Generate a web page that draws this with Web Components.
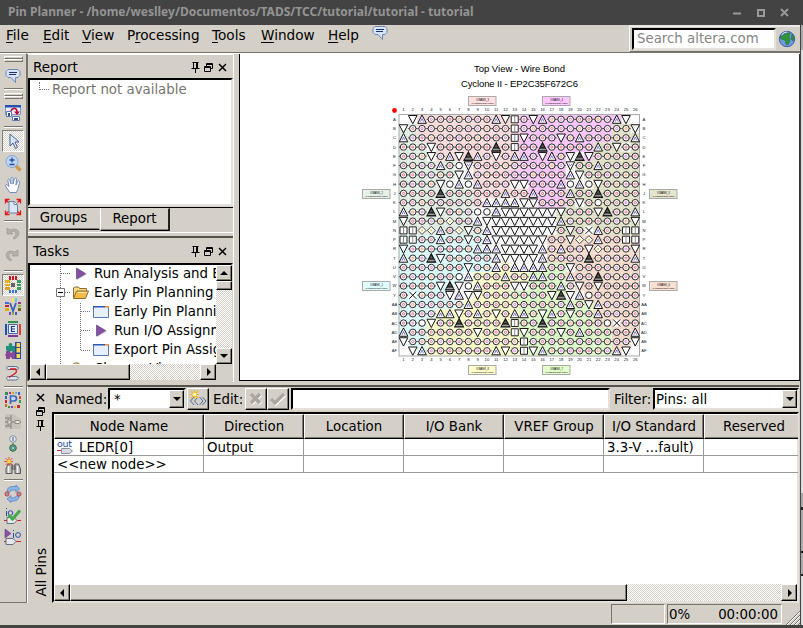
<!DOCTYPE html>
<html lang="en">
<head>
<meta charset="utf-8">
<title>Pin Planner</title>
<style>
html,body{margin:0;height:100%;overflow:hidden;background:#d4d0c8}
body{font:13.33px "DejaVu Sans",sans-serif;color:#000}
</style>
</head>
<body>
<pin-planner></pin-planner>
<script>
const def = (tag, css, html, init) => customElements.define(tag, class extends HTMLElement {
  constructor() {
    super();
    this.attachShadow({mode: 'open'}).innerHTML =
      `<style>*{box-sizing:border-box}:host{display:block;box-sizing:border-box;white-space:nowrap}${css}</style>${html}`;
  }
  connectedCallback() { if (init && !this.ready) { this.ready = true; init(this, this.shadowRoot); } }
});
const check = 'repeating-conic-gradient(#fff 0 25%,#d4d0c8 0 50%) 0 0/2px 2px';

/* ---------- icons ---------- */
const cells = (list) => list.map(([x, y, w, h, c]) => `<rect x="${x}" y="${y}" width="${w}" height="${h}" fill="${c}"/>`).join('');
const ICONS = {
  bubble: '<path d="M4 2.500h10l2 2v4l-2 2h-2.500v5l-4.500-5H4l-2-2v-4z" fill="#d5e4fb" stroke="#7188b0"/><path d="M5 5.500h8M5 7.500h7" stroke="#22345c" stroke-width="1.100"/>',
  find: '<path d="M1.500 1.500h15v9h-15z" fill="#e8eefa" stroke="#7f98cc"/><path d="M1 1h16v2.500H1z" fill="#2850b0"/><path d="M7 7q1-3 4-2.500 2 .5 2 3.500" fill="none" stroke="#c00030" stroke-width="1.500"/><path d="M10 7.500h6l-3 3.500z" fill="#c00030"/><path d="M2.500 7.500h5v5h-5zM8.500 12.500h7v4h-7z" fill="#fff" stroke="#5c78b0"/><path d="M4 9h2v3H4zM10 14h4v2h-4z" fill="#38507c"/>',
  arrow: '<path d="M6 2v12l3-3 2.500 5.500 2-1L11 10h4z" fill="#dbe7ff" stroke="#4a6394"/>',
  zoom: '<path d="M12 12l4.500 4.500" stroke="#d09848" stroke-width="3.400"/><circle cx="8" cy="7.500" r="6" fill="#bcd6fa" stroke="#86a6d2"/><path d="M8 3.500v5M5.500 6h5M5.500 10.500h5" stroke="#244c98" stroke-width="1.300"/>',
  hand: '<path d="M6 16.500L2 11c-1.200-2 .3-3 1.500-1.800L5 10.500 3.800 4.500c0-1.500 1.600-1.700 2 0L7 8V2.500c0-1.700 2-1.700 2 0V8l1.500-5.200c.6-1.500 2-1 2 .5L12 9l1.700-3.600c1-1.200 2.300-.4 1.900.9L14 12.500l-1.500 4z" fill="#fff" stroke="#6f8cc0"/>',
  fit: '<path d="M5 3.500h5.500l3 3v8.500H5z" fill="#dbe6fb" stroke="#6c80a8"/><path d="M10 3.500v3h3" fill="#fff" stroke="#6c80a8"/><path d="M1.500 5.500v-4h4M1.500 1.500l3 3M12.500 1.500h4v4M16.500 1.500l-3 3M1.500 12.500v4h4M1.500 16.500l3-3M16.500 12.500v4h-4M16.500 16.500l-3-3" fill="none" stroke="#e01818" stroke-width="1.300"/>',
  undo: '<path d="M3 3v6h6L7 7q5-2 5 2 0 2-3 4l2 1q4-3 4-6-1-6-9-3z" fill="#b4b1aa" stroke="#9d9992" stroke-width=".7"/>',
  redo: '<path d="M14 3v6H8l2-2Q5 5 5 9q0 2 3 4l-2 1Q2 11 2 8q1-6 9-3z" fill="#b4b1aa" stroke="#9d9992" stroke-width=".7"/>',
  pads: cells([[5,0,2,4,'#d01820'],[8,0,2,4,'#d01820'],[11,0,2,4,'#d01820'],[1,4,5,3,'#e0b020'],[1,8,5,2,'#e0b020'],[1,11,5,3,'#e0a028'],[13,4,4,3,'#38a058'],[13,8,4,2,'#38a058'],[13,11,4,3,'#38a058'],[5,14,2,3,'#3870d0'],[8,14,2,3,'#3870d0'],[11,14,2,3,'#3870d0'],[7,7,4,4,'#666']]),
  vpads: cells([[5,0,2,4,'#f0c0c8'],[8,0,2,4,'#f8e840'],[11,0,2,4,'#60c8f0'],[1,4,4,2,'#4070d0'],[1,7,4,2,'#d02020'],[1,10,4,3,'#e0b010'],[14,4,3,2,'#a03090'],[14,7,3,2,'#90b830'],[14,10,3,3,'#806018'],[5,14,2,3,'#9040c0'],[8,14,2,3,'#80b840'],[11,14,2,3,'#4858c0']]) + '<path d="M6 5l3 8 3-8" fill="none" stroke="#3a60b8" stroke-width="1.800"/>',
  epads: cells([[4,1,10,2,'#309050'],[4,15,10,2,'#803898'],[1,4,2,11,'#2050b8'],[15,4,2,11,'#e04038']]) + '<path d="M4.500 4.500h9v9h-9z" fill="#e8f0ff" stroke="#4068a8"/><path d="M11 6.500H7.500v5H11M7.500 9H11" stroke="#183888" fill="none" stroke-width="1.200"/>',
  puzzle: '<path d="M2 4h3q-1-3 1.500-3T8 4h3v4l1 2-3 1-1-2-3 1-3-2z" fill="#20907c"/><path d="M2 9h3l2 2 3-2 1 1v7H8q0-2-2-2v2H2v-3q-2-1 0-2z" fill="#884898"/>' + cells([[11,0,6,17,'#2848a0'],[12.5,1,3.500,4,'#f8d850'],[12.5,6,3.500,4.500,'#f8d850'],[12.5,12,3.500,4,'#f8d850']]),
  flow: '<path d="M3.500 2.500h8q3 0 3 2-1 1-3 1h-8q-2-1.500 0-3zM3.500 12.500h8q3 0 3 2-1 1.500-3 1.500h-8q-2-1.500 0-3.500z" fill="#dce4f0" stroke="#60718c"/><path d="M6 5h5.500q2 3-.5 4.500l-6 4" fill="none" stroke="#d01818" stroke-width="1.300"/>',
  ppads: cells([[1,1,3,3,'#30905c'],[5,1,2,2,'#b82888'],[8,1,2,2,'#e0a020'],[11,1,2,2,'#50b8e0'],[14,1,2,3,'#4060c0'],[1,5,2,3,'#3860b8'],[15,5,2,3,'#d05020'],[1,9,2,3,'#d02020'],[15,9,2,3,'#30a050'],[1,13,2,3,'#c07020'],[4,15,2,2,'#389048'],[7,15,2,2,'#8038b8'],[10,15,2,2,'#e0b820'],[13,14,3,3,'#c03030']]) + '<path d="M6.500 13V5h3q3 0 3 2.500t-3 2.500h-3" fill="#c8d9f8" stroke="#3868b8" stroke-width="1.700"/>',
  graynet: '<path d="M1 1h8l8 5v10H1z" fill="#c6c2ba"/><path d="M1 5h6M1 13h6M1 9h16M7 2v14" stroke="#96928b" stroke-width="1.300"/><path d="M4 6l4 3-4 3zM11 7.500h4l2 1.500-2 1.500h-4z" fill="#e4e1dc" stroke="#8f8b84"/>',
  lights: '<circle cx="9" cy="4" r="3.300" fill="#e8edf2" stroke="#8090a0"/><path d="M9 2v4" stroke="#405080"/><path d="M9 8v2" stroke="#666"/><circle cx="9" cy="13" r="3.300" fill="#68b870" stroke="#306840"/><circle cx="9" cy="13" r="1.500" fill="#c4e8ff" stroke="#2858a0" stroke-width=".7"/>',
  binoc: '<path d="M2 16.500V12l2-5h4v9.500zM16.500 16.500V12l-2-5H11v9.500zM8 9h3v3H8z" fill="#b8b8b8" stroke="#585858"/><path d="M4.500 9v7M13.500 9v7" stroke="#f4f4f4" stroke-width="1.500"/><path d="M5 0v9M0 4.500h9M1.500 1l7 7M8.500 1l-7 7" stroke="#f05030"/><circle cx="5" cy="4.500" r="1.800" fill="#ffe030"/>',
  cycle: '<path d="M3 7q0-5.500 6-5.500h3V0l3.500 4L12 7.500V5H9Q6 5 6 7z" fill="#8fb6e8" stroke="#5884bc" stroke-width=".8"/><path d="M15 11q0 5-6 5H7v1.500L3 14l4-3.500V13h2q3 0 3-2z" fill="#8fb6e8" stroke="#5884bc" stroke-width=".8"/><circle cx="3" cy="9" r="2" fill="#f8d8dc" stroke="#c02040"/><circle cx="15" cy="9" r="2" fill="#f8d8dc" stroke="#c02040"/><path d="M3 8v2M15 8v2" stroke="#008040"/>',
  iocheck: '<path d="M2.500 1v1M2.500 4v5" stroke="#2850a8"/><circle cx="6.500" cy="6" r="2.300" fill="none" stroke="#2850a8"/><path d="M0 13.500h3M13 13.500h4" stroke="#e01818"/><path d="M3 10.500h7l3 3-3 3H3z" fill="#e4e8ee" stroke="#607080"/><path d="M4.500 8l4 4L16 3.500" fill="none" stroke="#48a848" stroke-width="3"/>',
  iorun: '<path d="M1 0v9l6-4.500z" fill="#8d50aa" stroke="#604080" stroke-width=".6"/><path d="M9.500 1v1M9.500 4v5" stroke="#2850a8"/><circle cx="14" cy="6" r="2.400" fill="none" stroke="#2850a8"/><path d="M0 12.500h3M12 12.500h5" stroke="#e01818"/><path d="M2 9.500h7l3 3-3 3H2z" fill="#e4e8ee" stroke="#607080"/>',
  pin: '<path d="M4.500 2.500h6M5.500 3v5M8.500 3v5M9.500 3v5M3.500 8.500h8M7.500 9v4" fill="none" stroke="#000"/>',
  float: '<path d="M5.500 3.500h6v5h-6zM5 4.500h7" stroke="#000" fill="none"/><path d="M3.500 6.500h6v5h-6z" fill="#d4d0c8" stroke="#000"/><path d="M3 7.500h7" stroke="#000"/>',
  close: '<path d="M4 4l7 7M11 4l-7 7" stroke="#000" stroke-width="1.500"/>',
  play: '<path d="M5 4v11l10-5.500z" fill="#c4c4cc"/><path d="M4.500 3v11l9-5.500z" fill="#864fa0" stroke="#5d4288" stroke-width=".7"/>',
  folder: '<path d="M1.500 14V4l1-1h4l1 1.500h7V7" fill="#fbd883" stroke="#8d6c30"/><path d="M1.500 14.500L4.500 7h12l-3 7.500z" fill="#f3bc48" stroke="#8d6c30"/><path d="M5.500 8.500H15" stroke="#ffe9a8"/>',
  form: '<path d="M1.500 3.500h15v11h-15z" fill="#e8f0ff" stroke="#5878b0"/><path d="M1 3h12v1.500H1z" fill="#2c58b8"/><path d="M13 3h4v1.500h-4z" fill="#f09020"/>',
  out: '<path d="M0 12.500h5" stroke="#f02020"/><path d="M4.500 10.500h8l3 2.500-3 2.500h-8z" fill="#d8dce2" stroke="#8890a0"/>',
  globe: '<circle cx="9" cy="9" r="7.700" fill="#6f9ade" stroke="#3c5ea8"/><path d="M2 7q3-1 4-3 3-1 6-1l-1 4 1 3-2 5-2-1-1-4-4-1zM14 4l2 3-1 4-2-2z" fill="#319438" stroke="#1d6828" stroke-width=".5"/><path d="M4 4.500q2-2.500 5-2.500" stroke="#dcf0ff" fill="none"/>',
  filter: '<path d="M5 7l-3.500 4L5 15M9 7l-3.500 4L9 15M10.500 7l3.500 4-3.500 4M13.500 7l3.500 4-3.500 4" fill="none" stroke="#466ca6"/><path d="M5.500 0v9M1 4.500h9M2 1l7 7M9 1L2 8" stroke="#f0b820" stroke-width="1.200"/><circle cx="5.500" cy="4.500" r="1.800" fill="#fff7b0"/>',
  cancel: '<path d="M4 4l9 9M13 4l-9 9" stroke="#fff" stroke-width="3.500" transform="translate(.8 .8)"/><path d="M4 4l9 9M13 4l-9 9" stroke="#aaa69f" stroke-width="3.500"/>',
  ok: '<path d="M2 9l4 4 9-9" fill="none" stroke="#fff" stroke-width="3.500" transform="translate(.8 .8)"/><path d="M2 9l4 4 9-9" fill="none" stroke="#aaa69f" stroke-width="3.300"/>'
};
def('pp-icon', ':host{display:inline-block;width:18px;height:18px;flex:none}svg{display:block;width:18px;height:18px}', '<svg viewBox="0 0 18 18" fill="none"></svg>',
  (el, r) => { r.querySelector('svg').innerHTML = ICONS[el.getAttribute('name')] || ''; });

/* ---------- small controls ---------- */
def('tool-cell', `:host{height:22px;width:22px;margin-left:2px;display:grid;place-items:center}
  :host([on]){background:${check};border:1px solid;border-color:#808080 #fff #fff #808080}`, '<pp-icon></pp-icon>',
  (el, r) => { r.innerHTML = r.innerHTML.replace('<pp-icon>', `<pp-icon name="${el.getAttribute('name')}">`); });
def('tool-sep', ':host{display:grid;align-items:center;padding:0 3px 0 4px}i{height:2px;border-top:1px solid #77746d;border-bottom:1px solid #fff}', '<i></i>');
def('tool-grip', ':host{padding:2px 3px 0 4px;height:11px}i{display:block;height:3px;border:1px solid;border-color:#fff #77746d #77746d #fff}', '<i></i><i></i>');
def('raised-button', `:host{display:grid;place-items:center;background:#d4d0c8;border:1px solid;border-color:#fff #000 #000 #fff;box-shadow:inset -1px -1px #807c74;overflow:hidden}
  i{width:0;height:0;border:4px solid transparent}
  :host([dir=up]) i{border-bottom-color:#000;margin-top:-5px}:host([dir=down]) i{border-top-color:#000;margin-top:4px}
  :host([dir=left]) i{border-right-color:#000;margin-left:-5px}:host([dir=right]) i{border-left-color:#000;margin-left:5px}
  :host(:not([dir])) i{display:none}`, '<i></i><slot></slot>');
def('sunken-box', ':host{background:#fff;border:2px solid;border-color:#000 #e4e1dc #e4e1dc #000;display:flex;align-items:center;overflow:hidden}', '<slot></slot>');
def('h-scroll', `:host{display:flex;height:17px;background:${check}}raised-button{flex:none;width:16px}.t{width:var(--thumb)}u{flex:1}`,
  '<raised-button dir="left"></raised-button><raised-button class="t"></raised-button><u></u><raised-button dir="right"></raised-button>');
def('v-scroll', `:host{display:flex;flex-direction:column;width:17px;background:${check}}raised-button{flex:none;height:16px}.t{height:9px}u{flex:1}`,
  '<raised-button dir="up"></raised-button><raised-button class="t"></raised-button><u></u><raised-button dir="down"></raised-button>');

/* ---------- top of window ---------- */
def('title-bar', `:host{height:25px;background:#434343;color:#949494;display:flex;align-items:center;padding:0 8px 2px;font:bold 12px "Noto Sans",sans-serif}
  span{flex:1}svg{display:block}`,
  '<span><slot></slot></span><svg width="60" height="18" fill="none" stroke="#999" stroke-width="2"><path d="M1 10.500h8M26 7h6v6h-6zM49 6l7 7M56 6l-7 7"/></svg>');
def('menu-bar', `:host{height:27px;display:grid;grid-template-columns:36px 39px 45px 85px 49px 66px 44px 1fr 171px;background:#d4d0c8;padding-left:7px;line-height:20px;font-size:13.6px}
  b{font-weight:400;text-decoration:underline;text-underline-offset:2px}pp-icon{margin-top:-1px}
  .s{display:flex;align-items:center;border-left:1px solid #fff;border-top:2px solid #eceae6;border-bottom:1px solid #77746d;padding-left:2px}
  sunken-box{width:144px;height:22px;color:#858585;padding-left:3px;font-size:13.33px}.s pp-icon{margin:0 0 0 2px}`,
  `<a style="margin-left:-1px"><b>F</b>ile</a><a><b>E</b>dit</a><a><b>V</b>iew</a><a>P<b>r</b>ocessing</a><a><b>T</b>ools</a><a><b>W</b>indow</a><a style="margin-left:1px"><b>H</b>elp</a><pp-icon name="bubble"></pp-icon>
   <div class="s"><sunken-box>Search altera.com</sunken-box><pp-icon name="globe"></pp-icon></div>`);
const row = (...n) => n.map(x => `<tool-cell name="${x}"></tool-cell>`).join('');
const sep = h => `<tool-sep style="height:${h}px"></tool-sep>`;
def('tool-column', ':host{width:27px;border-top:1px solid #fff;border-right:1px solid #77746d;border-bottom:1px solid #77746d}',
  `<tool-grip></tool-grip>${row('bubble')}${sep(4)}<tool-grip></tool-grip>${row('find')}${sep(6)}
   <tool-cell name="arrow" on></tool-cell>${row('zoom','hand','fit')}${sep(5)}${row('undo','redo')}${sep(7)}
   <tool-cell name="pads" on></tool-cell>${row('vpads','epads','puzzle','flow')}${sep(5)}${row('ppads','graynet','lights','binoc')}${sep(6)}${row('cycle','iocheck','iorun')}`);

/* ---------- docks ---------- */
def('dock-head', ':host{display:flex;align-items:center;padding:1px 5px 0 5px;font-size:13.5px;border-top:1px solid #fff}span{flex:1}pp-icon{margin:3px -5px 0 0}pp-icon[name=close]{margin-left:1px}',
  '<span><slot></slot></span><pp-icon name="pin"></pp-icon><pp-icon name="float"></pp-icon><pp-icon name="close"></pp-icon>');
def('report-dock', `:host{height:178px;display:flex;flex-direction:column;border-right:1px solid #fff}
  dock-head{height:24px}.l{height:128px;background:#fff;border:2px solid;border-color:#000 #e4e1dc #e4e1dc #000;color:#77746f;padding:2px 0 0 9px;display:flex}
  i{width:10px;height:8px;margin-right:3px;border-left:1px dotted #777;border-bottom:1px dotted #777}
  .l span{line-height:16px}.tabs{display:flex;border-top:1px solid #000;margin-top:1px;padding-left:1px;height:24px;align-items:flex-start}
  .tabs b{font-weight:400;height:22px;width:71px;text-align:center;line-height:17px;padding-right:2px;border:1px solid;border-color:#d4d0c8 #d4d0c8 #000 #fff;box-shadow:inset 0 -1px #807c74}
  .tabs .on{height:23px;width:70px;line-height:19px;padding-right:0;border-right:2px solid #222}`,
  `<dock-head>Report</dock-head><div class="l"><i></i><span>Report not available</span></div>
   <div class="tabs"><b>Groups</b><b class="on">Report</b></div>`);
def('task-row', ':host{height:19px;display:flex;align-items:center;line-height:19px}pp-icon{margin-right:4px}',
  '<pp-icon></pp-icon><slot></slot>', (el, r) => { r.innerHTML = r.innerHTML.replace('<pp-icon>', `<pp-icon name="${el.getAttribute('icon')}">`); el.style.paddingLeft = el.getAttribute('x') + 'px'; });
def('task-dock', `:host{height:150px;display:flex;flex-direction:column;border-top:1px solid #fff;border-right:1px solid #fff;padding-top:3px}
  dock-head{height:27px;border-top:2px solid #55524c}.b{height:118px;background:#fff;border:2px solid;border-color:#000 #d4d0c8 #d4d0c8 #000;display:grid;grid-template:99px 16px/186px 16px}
  .t{overflow:hidden;position:relative}.t div{margin-top:-1px}h-scroll{--thumb:84px;height:16px}v-scroll{width:16px}.c{background:#d4d0c8}
  svg{position:absolute;left:0;top:0}`,
  `<dock-head>Tasks</dock-head><div class="b"><div class="t"><div>
   <task-row icon="play" x="42">Run Analysis and E</task-row><task-row icon="folder" x="42">Early Pin Planning</task-row>
   <task-row icon="form" x="62">Early Pin Planni</task-row><task-row icon="play" x="62">Run I/O Assignm</task-row><task-row icon="form" x="62">Export Pin Assig</task-row><task-row icon="folder" x="42">Change View</task-row></div>
   <svg width="62" height="99" fill="none" stroke="#777"><path d="M30.500 0v99M31 8.500h9M31 27.500h9M50.500 38v48M51 46.500h9M51 65.500h9M51 85.500h9" stroke-dasharray="1 1"/><path d="M26.500 23.500h8v8h-8z" fill="#fff" stroke="#777"/><path d="M28 27.500h5" stroke="#000"/></svg>
   </div><v-scroll></v-scroll><h-scroll></h-scroll><div class="c"></div></div>`);

/* ---------- package view ---------- */
const PINS = [
  ' v^ooooooo^vsov^ooooooo^v ','voooooooooooSooooooooooooov','^oooooooooooSvooovo^ooooo^','ooovoooooobosoobooooo^ovoo',
  'ooovo^vb^ovo^^ov^ovbvooooo','oooo^onwoooooooooowoo^oooo','oooooov^oooooooooo^voooooo','oooovn^n^ooovvooo^n^nvoooo',
  'oooobooooooo^oo^ooo^oobooo','ooooooooo^^^^vvoooovonoooo','^oobvooonn^vvvvvvvooovboo^','voooodoo^vvvvvvvv^ooooooov',
  'ssdd^odvo^vvvvvvvovox^ooss','ssoo^oovo^vvvvvvoovdd^ooss','vooooooo^^^vvvv^o^oovdooov','^oobvooooo^vvvv^oooobooo^',
  'ooooooovoo^o^^^^oovooooooo','oooooon^ooo^oo^^oo^oobooooo','oooovbvn^ooovvooo^ovovoooo','oxooov^vvooooooovbv^nooooo',
  'ooooooo^oooooooooo^ov^oooo','oooo^^vo^ovo^^ov^ovoo^oooo','oonvooboooobsoobooooOonxoo','^ooooooovooosvooovo^ooooo^',
  'voooooooooooosooooooooooov',' v^ooooooo^vosv^ooooooo^v '];
PINS[1] = 'v' + 'o'.repeat(11) + 's' + 'o'.repeat(12) + 'v';
PINS[2] = '^' + 'o'.repeat(11) + 'sooo'.slice(0, 1) + 'vooovo^ooooo^';
PINS[3] = 'ooovoooooobos' .slice(0, 13) + 'oobooooo^ovoo';
PINS[8] = 'oooobooooooo'.slice(0, 11) + '^o' + 'o^ooo^oobooooo'.slice(0, 13);
PINS[15] = '^oobvooooo^vv' + 'vv^oooobooooo'.slice(0, 12) + '^';
PINS[17] = 'oooooon^ooo^o' + 'o^^oo^ooboooo';
PINS[22] = 'oonvooboooobs' + 'oobooooooNxoo'.replace('N', 'n');
PINS[24] = 'voooooooooooo' + 'sooooooooooov';
const BANK = [
  '..PPPPPPPPPPPMMMMMMMMMMM..','GGPPPPPPPPPPPMMMMMMMMMMOO.','GGPPPPPPPPPPPMMMMMMMMMMOOO','GGG.PPPPPPPPPMMMMMMMMOOO.O',
  'GGG.PPPPPPPPPMMMMM..MOOOOO','GGGGGG..PPPPPMMMMM.OOOOOOO','GGGGGG..PPPPMMMMMM..OOOOOO','GGGGG...PPPP..MMMM...OOOOO',
  'GGGGGGGGPPPPPPMMMMOOOOOOOO','GGGGGGGGP......MMMO.OOOOOO','GGGGGGGG.........OOOOOOOOO','GGGGGGGG.........OOOOOOOOO',
  'GGGGGGGGG........OOO.OOOOO','CCCCCCCCC.......RRRRRRRRRR','CCCCCCCCC.......RRRRRRRRRR','CCCCCCCCCC......RRRRRRRRRR',
  'CCCCCCCCCC.Y....LL.RRRRRRR','CCCCCCC.YYYYYYLLLLRRRRRRRR','CCCCCC..YYYY..LLLL.RRRRRRR','CCCCC...YYYYLLLLLL..RRRRRR',
  'CCCCCC.YYYYYYLLLLLLLLRRRRR','CCCCYYYYYYYYYLLLLLLLLRRRRR','CCCYYYYYYYYYYLLLLLLLLRRRRR','CCCYYYYYYYYYYLLLLLLLLLLRRR',
  '.CCYYYYYYYYYYLLLLLLLLLLRR.','..CYYYYYYYYYYLLLLLLLLLLR..'];
const TINT = {P:'#ffe0e0',M:'#ffc8ff',O:'#e6e6cc',G:'#e6f2e8',C:'#e0ffff',R:'#fae0d0',L:'#e2ffcc',Y:'#ffffcc'};
const ROWS = 'A B C D E F G H J K L M N P R T U V W Y AA AB AC AD AE AF'.split(' ');
def('package-view', ':host{background:#fff}svg{display:block;font-family:"Liberation Sans",Arial,sans-serif}', '', (el, r) => {
  const sx = 9.27, sy = 9.26, X = c => 163.500 + c * sx, Y = k => 65.300 + k * sy;
  let bg = '', tri = '', pins = '', txt = '';
  const ink = ['#f02848', '#e838a0', '#f87830', '#f03060', '#d050d0'];
  ROWS.forEach((name, k) => {
    [...BANK[k]].forEach((b, c) => { if (TINT[b]) bg += `<rect x="${X(c)-4.64}" y="${Y(k)-4.63}" width="9.400" height="9.400" fill="${TINT[b]}"/>`; });
    [...PINS[k]].slice(0, 26).forEach((p, c) => {
      const x = X(c), y = Y(k), g = `translate(${x.toFixed(2)} ${y.toFixed(2)})`;
      if (p === 'o') pins += `<g transform="${g}"><path d="M-4.600 0h1.400M3.200 0h1.400" stroke="#333" stroke-width=".9"/><circle r="3.200" fill="#fff" stroke="#222" stroke-width=".95"/><circle r="1.100" fill="none" stroke="${ink[(c*7+k*5+c*k)%5]}" stroke-width=".9" opacity=".7"/></g>`;
      else if (p === 'n') pins += `<circle transform="${g}" r="3.300" fill="#fff" stroke="#222"/>`;
      else if (p === 'v' || p === 'w') tri += `<g transform="${g}"><path d="M-4.300-3.800h8.600L0 4.500z" fill="#fff" stroke="#161616" stroke-width="1"/>${p === 'w' ? '<path d="M-1.500-2l1.500 2.500L1.500-2" stroke="#6858d8" fill="none" stroke-width=".8"/>' : ''}</g>`;
      else if (p === '^') tri += `<g transform="${g}"><path d="M-4.300 4h8.600L0-4.300z" fill="#fff" stroke="#161616" stroke-width="1"/><path d="M-1.500 2.500L0-.8 1.500 2.500" stroke="#6858d8" fill="none" stroke-width=".8"/></g>`;
      else if (p === 'b') tri += `<g transform="${g}"><path d="M-4.300 4h8.600L0-4.300z" fill="#555" stroke="#111" stroke-width="1.200"/><path d="M-3.500 2.500h7" stroke="#bbb" stroke-width=".8"/><path d="M-2 .6h4" stroke="#222"/></g>`;
      else if (p === 's') pins += `<path transform="${g}" d="M-3.500-3.500h7v7h-7z" fill="#fff" stroke="#222"/><path transform="${g}" d="M0-3v6" stroke="#888"/>`;
      else if (p === 'd') pins += `<g transform="${g}"><path d="M0-4L4 0 0 4-4 0z" fill="#fff" stroke="#333" stroke-width=".9"/><circle r="1" fill="#d8c838"/></g>`;
      else if (p === 'x') pins += `<path transform="${g}" d="M-3.500-3.500h7v7h-7z" fill="#fff"/><path transform="${g}" d="M-3.500-3.500l7 7M3.500-3.500l-7 7" stroke="#111"/>`;
    });
    txt += `<text x="154.500" y="${Y(k)+1.500}">${name}</text><text x="404" y="${Y(k)+1.500}">${name}</text>`;
  });
  for (let c = 0; c < 26; c++) txt += `<text x="${X(c)}" y="57.300">${c+1}</text><text x="${X(c)}" y="306.500">${c+1}</text>`;
  const bank = (x, y, f, n) => `<rect x="${x}" y="${y}" width="27.500" height="9" fill="${f}" stroke="#aaa"/><text x="${x+14}" y="${y+4}" font-size="2.600" fill="#000">IOBANK_${n}</text><text x="${x+14}" y="${y+7.200}" font-size="2.500" fill="#000">(0 assigned/59 total)</text>`;
  r.innerHTML += `<svg width="558" height="326" viewBox="0 0 558 326">
    <defs><pattern id="k" width="3.100" height="3.100" patternUnits="userSpaceOnUse"><path d="M0 0h1v1H0zM1.550 1.550h1v1h-1z" fill="#777" opacity=".26"/></pattern></defs>
    <g text-anchor="middle" font-size="9.500"><text x="279.500" y="17.500">Top View - Wire Bond</text><text x="279.500" y="32.500" textLength="117" lengthAdjust="spacing">Cyclone II - EP2C35F672C6</text></g>
    <circle cx="154.500" cy="56.500" r="2.400" fill="#f00"/>
    ${bg}<rect x="159" y="61" width="241" height="241" fill="url(#k)"/><rect x="159" y="60.500" width="240.500" height="241.500" fill="none" stroke="#aaa"/>
    <path d="M160 62h8v8h-8zM391 62h8v8h-8zM160 293h8v8h-8zM391 293h8v8h-8z" fill="#fff"/>
    ${tri}${pins}
    <g text-anchor="middle" font-size="4.200" fill="#123">${txt}
    ${bank(228.500,42.500,TINT.P,3)}${bank(302.500,42.500,TINT.M,4)}${bank(122.500,135.500,TINT.G,2)}${bank(122.500,227.500,TINT.C,1)}${bank(409.500,135.500,TINT.O,5)}${bank(409.500,227.500,TINT.R,6)}${bank(228.500,311.500,TINT.Y,8)}${bank(302.500,311.500,TINT.L,7)}</g></svg>`;
});

/* ---------- All Pins ---------- */
def('filter-bar', `:host{display:flex;height:22px;align-items:center;padding-left:3px}
  sunken-box{height:22px;padding-left:4px}.c{justify-content:space-between}.c raised-button{width:15px;height:18px}
  .b{width:22px;height:22px}label{flex:none}`,
  `<label style="width:53px">Named:</label><sunken-box class="c" style="width:78px">*<raised-button dir="down"></raised-button></sunken-box>
   <raised-button class="b" style="margin-left:1px"><pp-icon name="filter"></pp-icon></raised-button><label style="width:36px;padding-left:4px">Edit:</label>
   <raised-button class="b"><pp-icon name="cancel"></pp-icon></raised-button><raised-button class="b"><pp-icon name="ok"></pp-icon></raised-button>
   <sunken-box style="flex:1;margin-left:2px"></sunken-box><label style="width:43px;padding-left:4px">Filter:</label><sunken-box class="c" style="width:146px;padding-left:1px">Pins: all<raised-button dir="down"></raised-button></sunken-box>`);
def('pin-table', `:host{display:flex;flex-direction:column;background:#fff;border:2px solid;border-color:#000 #e4e1dc #e4e1dc #000}
  .g{display:grid;grid-template-columns:150px repeat(6,100px);width:744px;overflow:hidden}
  .g>b{font-weight:400;height:25px;line-height:24px;text-align:center;background:#d4d0c8;border:1px solid;border-color:#fff #222 #000 #fff;box-shadow:inset -1px -1px #807c74}
  .g>span{height:17px;line-height:17px;padding-left:3px;border-right:1px solid #9a9a9a;border-bottom:1px solid #9a9a9a;display:flex}
  .o{width:22px;display:grid;height:16px}.o small{grid-area:1/1;font:9.500px/9px "DejaVu Sans",sans-serif;color:#2848a0;letter-spacing:-.3px}.o pp-icon{grid-area:1/1;margin-top:-1px}
  h-scroll{--thumb:557px;margin-top:auto}`,
  `<div class="g"><b>Node Name</b><b>Direction</b><b>Location</b><b>I/O Bank</b><b>VREF Group</b><b>I/O Standard</b><b>Reserved</b>
   <span><div class="o"><small>out</small><pp-icon name="out"></pp-icon></div>LEDR[0]</span><span>Output</span><span></span><span></span><span></span><span>3.3-V ...fault)</span><span></span>
   <span>&lt;&lt;new node&gt;&gt;</span><span></span><span></span><span></span><span></span><span></span><span></span></div><h-scroll></h-scroll>`);
def('pins-dock', `:host{display:flex;border-left:1px solid #fff;border-top:2px solid #55524c}
  aside{width:24px;display:flex;flex-direction:column;align-items:center;padding:3px 0 0 1px}aside pp-icon{margin:0 -3px -4px 0}
  aside span{margin-top:auto;margin-bottom:6px;writing-mode:vertical-rl;transform:rotate(180deg);font-size:13.600px}
  main{flex:1;display:flex;flex-direction:column;gap:2px;min-width:0;padding-top:1px}pin-table{flex:1;min-height:0}`,
  `<aside><pp-icon name="close"></pp-icon><pp-icon name="float"></pp-icon><pp-icon name="pin"></pp-icon><span>All Pins</span></aside>
   <main><filter-bar></filter-bar><pin-table></pin-table></main>`);
def('status-bar', `:host{height:22px;display:flex;justify-content:flex-end;padding-top:1px;gap:2px}
  div{height:20px;border:1px solid;border-color:#77746d #fff #fff #77746d;line-height:19px;display:flex;justify-content:space-between;padding:0 3px 0 1px}svg{margin-left:2px}`,
  '<div style="width:54px"></div><div style="width:115px"><span>0%</span><span>00:00:00</span></div><svg width="14" height="21" stroke="#77746d"><path d="M0 21L14 7M4 21l10-10M8 21l6-6M12 21l2-2"/><path d="M1 21L14 8M5 21l9-9M9 21l5-5" stroke="#fff"/></svg>');

def('pin-planner', `:host{width:803px;height:628px;display:grid;grid-template-columns:800px 3px;background:#434343}
  .w{background:#d4d0c8;height:625px;display:flex;flex-direction:column}
  .m{flex:1;display:flex;border-top:1px solid #77746d;min-height:0}
  .r{flex:1;display:flex;flex-direction:column;min-width:0}.u{display:flex;height:328px;border-top:1px solid #fff}
  .d{width:207px;border-left:1px solid #77746d}.v{margin-left:5px;flex:1;border-left:1px solid #000;border-bottom:2px solid #000;border-right:1px solid #333;min-width:0}
  .v package-view{height:326px;overflow:hidden}pins-dock{flex:1;margin-top:4px;margin-right:1px;min-height:0}
  .e{background:linear-gradient(#434343 0 25px,#aaa 25px 50px,#ddd 50px 493px,#aaa 493px 507px,#222 507px 510px,#aaa 510px 551px,#222 551px 553px,#aaa 553px 574px,#222 574px 576px,#ddd 576px 625px,#434343 625px);border-left:1px solid #434343}`,
  `<div class="w"><title-bar>Pin Planner - /home/weslley/Documentos/TADS/TCC/tutorial/tutorial - tutorial</title-bar><menu-bar></menu-bar>
   <div class="m"><tool-column></tool-column><div class="r"><div class="u"><div class="d"><report-dock></report-dock><task-dock></task-dock></div><div class="v"><package-view></package-view></div></div><pins-dock></pins-dock></div></div>
   <status-bar></status-bar></div><div class="e"></div>`);
</script>
</body>
</html>
